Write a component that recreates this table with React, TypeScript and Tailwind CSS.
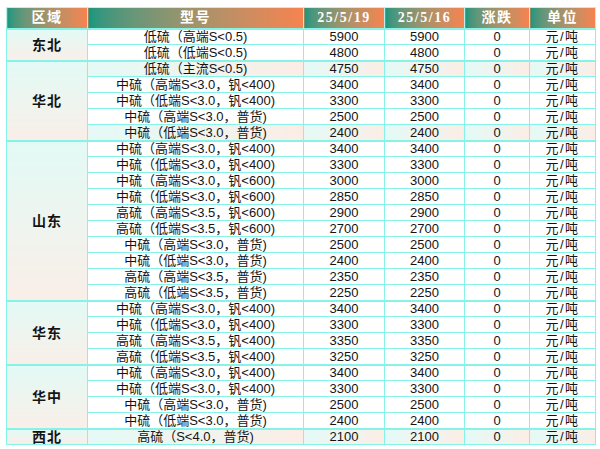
import React from 'react'

type Row = { model: string; a: string; b: string; tint?: boolean }
type Group = { region: string; rows: Row[] }

const groups: Group[] = [
  {
    region: '东北',
    rows: [
      { model: '低硫（高端S<0.5)', a: '5900', b: '5900' },
      { model: '低硫（低端S<0.5)', a: '4800', b: '4800' },
    ],
  },
  {
    region: '华北',
    rows: [
      { model: '低硫（主流S<0.5)', a: '4750', b: '4750', tint: true },
      { model: '中硫（高端S<3.0，钒<400)', a: '3400', b: '3400' },
      { model: '中硫（低端S<3.0，钒<400)', a: '3300', b: '3300' },
      { model: '中硫（高端S<3.0，普货)', a: '2500', b: '2500' },
      { model: '中硫（低端S<3.0，普货)', a: '2400', b: '2400', tint: true },
    ],
  },
  {
    region: '山东',
    rows: [
      { model: '中硫（高端S<3.0，钒<400)', a: '3400', b: '3400' },
      { model: '中硫（低端S<3.0，钒<400)', a: '3300', b: '3300' },
      { model: '中硫（高端S<3.0，钒<600)', a: '3000', b: '3000' },
      { model: '中硫（低端S<3.0，钒<600)', a: '2850', b: '2850' },
      { model: '高硫（高端S<3.5，钒<600)', a: '2900', b: '2900' },
      { model: '高硫（低端S<3.5，钒<600)', a: '2700', b: '2700' },
      { model: '中硫（高端S<3.0，普货)', a: '2500', b: '2500' },
      { model: '中硫（低端S<3.0，普货)', a: '2400', b: '2400' },
      { model: '高硫（高端S<3.5，普货)', a: '2350', b: '2350' },
      { model: '高硫（低端S<3.5，普货)', a: '2250', b: '2250' },
    ],
  },
  {
    region: '华东',
    rows: [
      { model: '中硫（高端S<3.0，钒<400)', a: '3400', b: '3400' },
      { model: '中硫（低端S<3.0，钒<400)', a: '3300', b: '3300' },
      { model: '高硫（高端S<3.5，钒<400)', a: '3350', b: '3350' },
      { model: '高硫（低端S<3.5，钒<400)', a: '3250', b: '3250' },
    ],
  },
  {
    region: '华中',
    rows: [
      { model: '中硫（高端S<3.0，钒<400)', a: '3400', b: '3400' },
      { model: '中硫（低端S<3.0，钒<400)', a: '3300', b: '3300' },
      { model: '中硫（高端S<3.0，普货)', a: '2500', b: '2500' },
      { model: '中硫（低端S<3.0，普货)', a: '2400', b: '2400' },
    ],
  },
  {
    region: '西北',
    rows: [{ model: '高硫（S<4.0，普货)', a: '2100', b: '2100', tint: true }],
  },
]

const headers = ['区域', '型号', '25/5/19', '25/5/16', '涨跌', '单位']
const widths = ['w-[81px]', 'w-[216px]', 'w-[81px]', 'w-[80px]', 'w-[65px]', 'w-[66px]']

export default function App() {
  return (
    <div className="w-[600px] h-[449px] bg-white pt-[7px] pl-[6px]"
      style={{ fontFamily: '"Liberation Sans", "Noto Sans CJK SC", sans-serif' }}>
      <table className="table-fixed border-collapse w-[589px] text-[13px] leading-none text-[#141414]">
        <colgroup>
          {widths.map((w, i) => <col key={i} className={w} />)}
        </colgroup>
        <thead>
          <tr className="h-[21px]">
            {headers.map(h => (
              <th key={h}
                className="p-0 border border-[#bfeee6] bg-gradient-to-r from-[#14967f] to-[#f7824f] text-white font-bold text-[14px] tracking-[1.5px] text-center"
                style={{ fontFamily: '"Liberation Serif", "Noto Sans CJK SC", serif' }}>
                {h}
              </th>
            ))}
          </tr>
        </thead>
        <tbody>
          {groups.map(g =>
            g.rows.map((r, i) => {
              const cell = `p-0 text-center border-x border-b border-[#86f3e8] ${i === 0 ? 'border-t-2 border-t-[#86f3e8]' : 'border-t'} ${
                r.tint ? 'bg-gradient-to-r from-[#e4faf6] to-[#fbede6]' : 'bg-white'
              }`
              return (
                <tr key={g.region + i} className="h-[16px]">
                  {i === 0 && (
                    <td rowSpan={g.rows.length}
                      className="p-0 text-center font-bold text-[14px] tracking-[1px] border-x border-b border-t-2 border-[#86f3e8] bg-gradient-to-b from-[#e2faf5] to-[#f9eee8]">
                      {g.region}
                    </td>
                  )}
                  <td className={cell}>{r.model}</td>
                  <td className={cell}>{r.a}</td>
                  <td className={cell}>{r.b}</td>
                  <td className={cell}>0</td>
                  <td className={`${cell} tracking-[1.5px]`}>元/吨</td>
                </tr>
              )
            })
          )}
        </tbody>
      </table>
    </div>
  )
}
